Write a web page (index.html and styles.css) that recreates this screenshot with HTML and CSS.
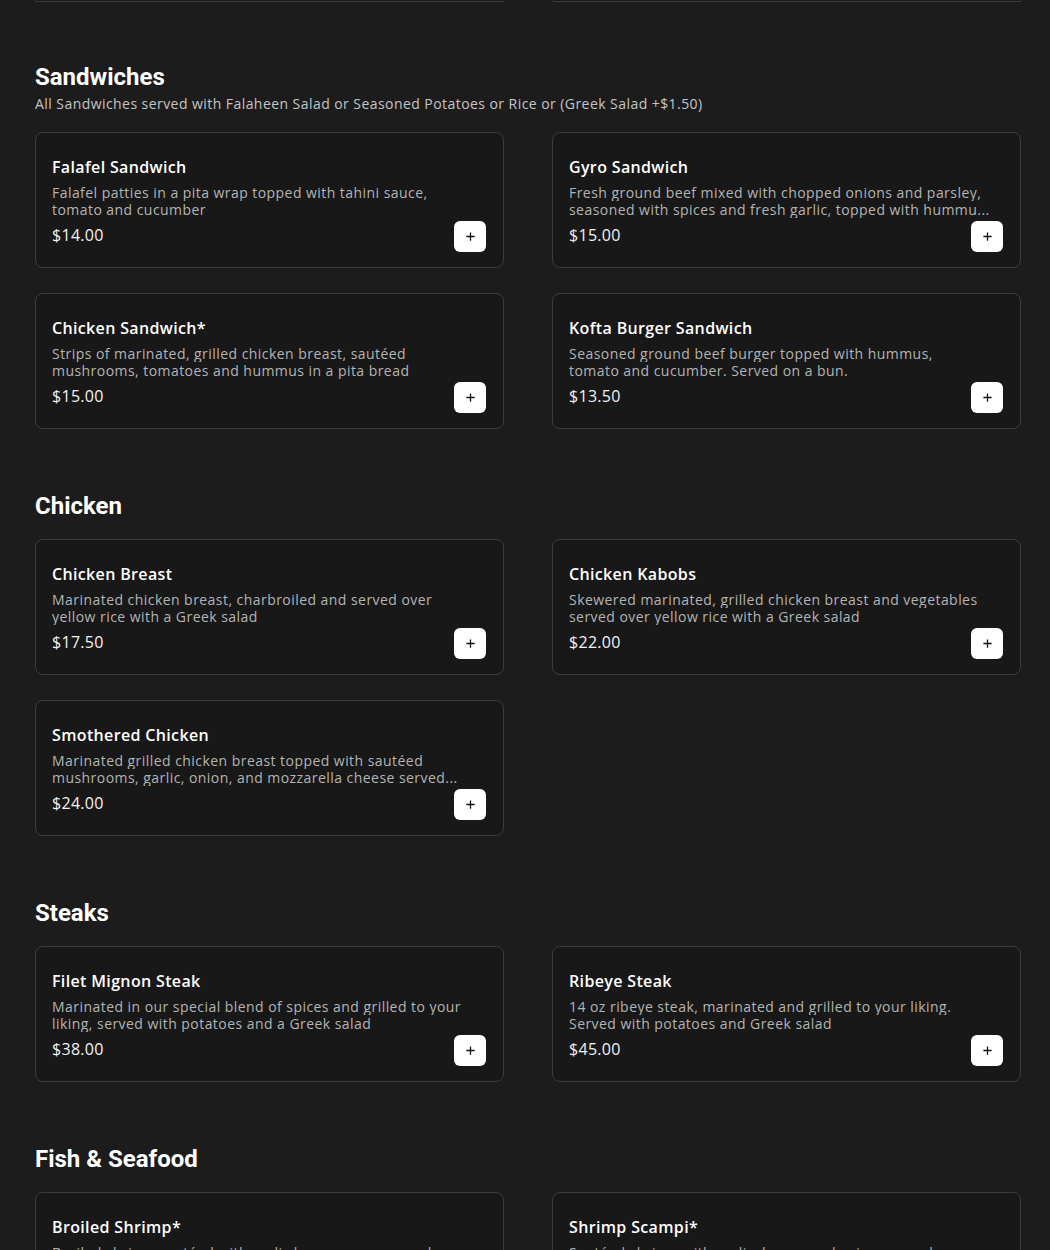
FILE: index.html
```html
<!DOCTYPE html>
<html lang="en">
<head>
<meta charset="utf-8">
<title>Menu</title>
<link rel="stylesheet" href="styles.css">
</head>
<body>
<main class="menu">
  <div class="grid prev">
    <div class="card-tail"></div>
    <div class="card-tail"></div>
  </div>

  <section class="section">
    <header class="sec-head">
      <h2 class="sec-title">Sandwiches</h2>
      <p class="sec-sub">All Sandwiches served with Falaheen Salad or Seasoned Potatoes or Rice or (Greek Salad +$1.50)</p>
    </header>
    <div class="grid">
      <article class="card">
        <h3 class="item-name">Falafel Sandwich</h3>
        <p class="item-desc"><span>Falafel patties in a pita wrap topped with tahini sauce,</span><span>tomato and cucumber</span></p>
        <div class="item-foot"><span class="price">$14.00</span><button class="add" aria-label="Add"><svg viewBox="0 0 12 12" width="11" height="11"><path d="M6 1.5v9M1.5 6h9" stroke="#111" stroke-width="1.4" fill="none"/></svg></button></div>
      </article>
      <article class="card">
        <h3 class="item-name">Gyro Sandwich</h3>
        <p class="item-desc"><span>Fresh ground beef mixed with chopped onions and parsley,</span><span>seasoned with spices and fresh garlic, topped with hummu...</span></p>
        <div class="item-foot"><span class="price">$15.00</span><button class="add" aria-label="Add"><svg viewBox="0 0 12 12" width="11" height="11"><path d="M6 1.5v9M1.5 6h9" stroke="#111" stroke-width="1.4" fill="none"/></svg></button></div>
      </article>
      <article class="card">
        <h3 class="item-name">Chicken Sandwich*</h3>
        <p class="item-desc"><span>Strips of marinated, grilled chicken breast, sautéed</span><span>mushrooms, tomatoes and hummus in a pita bread</span></p>
        <div class="item-foot"><span class="price">$15.00</span><button class="add" aria-label="Add"><svg viewBox="0 0 12 12" width="11" height="11"><path d="M6 1.5v9M1.5 6h9" stroke="#111" stroke-width="1.4" fill="none"/></svg></button></div>
      </article>
      <article class="card">
        <h3 class="item-name">Kofta Burger Sandwich</h3>
        <p class="item-desc"><span>Seasoned ground beef burger topped with hummus,</span><span>tomato and cucumber. Served on a bun.</span></p>
        <div class="item-foot"><span class="price">$13.50</span><button class="add" aria-label="Add"><svg viewBox="0 0 12 12" width="11" height="11"><path d="M6 1.5v9M1.5 6h9" stroke="#111" stroke-width="1.4" fill="none"/></svg></button></div>
      </article>
    </div>
  </section>

  <section class="section">
    <header class="sec-head">
      <h2 class="sec-title">Chicken</h2>
    </header>
    <div class="grid">
      <article class="card">
        <h3 class="item-name">Chicken Breast</h3>
        <p class="item-desc"><span>Marinated chicken breast, charbroiled and served over</span><span>yellow rice with a Greek salad</span></p>
        <div class="item-foot"><span class="price">$17.50</span><button class="add" aria-label="Add"><svg viewBox="0 0 12 12" width="11" height="11"><path d="M6 1.5v9M1.5 6h9" stroke="#111" stroke-width="1.4" fill="none"/></svg></button></div>
      </article>
      <article class="card">
        <h3 class="item-name">Chicken Kabobs</h3>
        <p class="item-desc"><span>Skewered marinated, grilled chicken breast and vegetables</span><span>served over yellow rice with a Greek salad</span></p>
        <div class="item-foot"><span class="price">$22.00</span><button class="add" aria-label="Add"><svg viewBox="0 0 12 12" width="11" height="11"><path d="M6 1.5v9M1.5 6h9" stroke="#111" stroke-width="1.4" fill="none"/></svg></button></div>
      </article>
      <article class="card">
        <h3 class="item-name">Smothered Chicken</h3>
        <p class="item-desc"><span>Marinated grilled chicken breast topped with sautéed</span><span>mushrooms, garlic, onion, and mozzarella cheese served...</span></p>
        <div class="item-foot"><span class="price">$24.00</span><button class="add" aria-label="Add"><svg viewBox="0 0 12 12" width="11" height="11"><path d="M6 1.5v9M1.5 6h9" stroke="#111" stroke-width="1.4" fill="none"/></svg></button></div>
      </article>
    </div>
  </section>

  <section class="section">
    <header class="sec-head">
      <h2 class="sec-title">Steaks</h2>
    </header>
    <div class="grid">
      <article class="card">
        <h3 class="item-name">Filet Mignon Steak</h3>
        <p class="item-desc"><span>Marinated in our special blend of spices and grilled to your</span><span>liking, served with potatoes and a Greek salad</span></p>
        <div class="item-foot"><span class="price">$38.00</span><button class="add" aria-label="Add"><svg viewBox="0 0 12 12" width="11" height="11"><path d="M6 1.5v9M1.5 6h9" stroke="#111" stroke-width="1.4" fill="none"/></svg></button></div>
      </article>
      <article class="card">
        <h3 class="item-name">Ribeye Steak</h3>
        <p class="item-desc"><span>14 oz ribeye steak, marinated and grilled to your liking.</span><span>Served with potatoes and Greek salad</span></p>
        <div class="item-foot"><span class="price">$45.00</span><button class="add" aria-label="Add"><svg viewBox="0 0 12 12" width="11" height="11"><path d="M6 1.5v9M1.5 6h9" stroke="#111" stroke-width="1.4" fill="none"/></svg></button></div>
      </article>
    </div>
  </section>

  <section class="section">
    <header class="sec-head">
      <h2 class="sec-title">Fish &amp; Seafood</h2>
    </header>
    <div class="grid">
      <article class="card">
        <h3 class="item-name">Broiled Shrimp*</h3>
        <p class="item-desc"><span>Broiled shrimp sautéed with garlic lemon sauce served</span><span>over yellow rice with a Greek salad</span></p>
        <div class="item-foot"><span class="price">$24.00</span><button class="add" aria-label="Add"><svg viewBox="0 0 12 12" width="11" height="11"><path d="M6 1.5v9M1.5 6h9" stroke="#111" stroke-width="1.4" fill="none"/></svg></button></div>
      </article>
      <article class="card">
        <h3 class="item-name">Shrimp Scampi*</h3>
        <p class="item-desc"><span>Sautéed shrimp with garlic, lemon and spices served</span><span>over yellow rice with a Greek salad</span></p>
        <div class="item-foot"><span class="price">$24.00</span><button class="add" aria-label="Add"><svg viewBox="0 0 12 12" width="11" height="11"><path d="M6 1.5v9M1.5 6h9" stroke="#111" stroke-width="1.4" fill="none"/></svg></button></div>
      </article>
    </div>
  </section>
</main>
</body>
</html>
```

FILE: styles.css
```css
* { box-sizing: border-box; }

html, body {
  margin: 0;
  padding: 0;
  background: #1c1c1c;
}

body {
  font-family: "Open Sans", "DejaVu Sans", sans-serif;
  color: #ffffff;
  overflow: hidden;
}

.menu {
  width: 986px;
  margin-left: 35px;
  padding-bottom: 40px;
}

.grid {
  display: grid;
  grid-template-columns: 1fr 1fr;
  column-gap: 48px;
  row-gap: 25px;
}

.prev .card-tail {
  height: 2px;
  border: 1px solid #3c3c3c;
  border-top: none;
  border-radius: 0 0 8px 8px;
  background: #181818;
}

.section {
  margin-top: 63px;
}

.section:first-of-type {
  margin-top: 61px;
}

.sec-head {
  margin-bottom: 19px;
}

.sec-title {
  margin: 0;
  font-family: Roboto, "Liberation Sans", sans-serif;
  font-weight: 700;
  font-size: 24px;
  line-height: 28px;
  color: #ffffff;
}

.sec-sub {
  margin: 3px 0 -1px;
  font-size: 14px;
  line-height: 20px;
  letter-spacing: 0.44px;
  color: #c4c4c4;
}

.card {
  height: 136px;
  border: 1px solid #3c3c3c;
  border-radius: 8px;
  background: #181818;
  padding: 24px 17px 14px 16px;
  display: flex;
  flex-direction: column;
}

.item-name {
  margin: 0;
  font-size: 16px;
  line-height: 20px;
  font-weight: 600;
  letter-spacing: 0.35px;
  color: #ffffff;
}

.item-desc {
  margin: 7px 0 0;
  font-size: 14px;
  line-height: 17px;
  letter-spacing: 0.45px;
  color: #b4b4b4;
}

.item-desc span {
  display: block;
  white-space: nowrap;
  overflow: hidden;
  text-overflow: ellipsis;
}

.item-foot {
  margin-top: 2px;
  display: flex;
  align-items: center;
  justify-content: space-between;
  height: 32px;
}

.price {
  font-size: 16px;
  letter-spacing: 0.3px;
  padding-bottom: 2px;
  color: #f2f2f2;
}

.add {
  width: 32px;
  height: 31px;
  border: none;
  border-radius: 6px;
  background: #ffffff;
  padding: 0;
  display: flex;
  align-items: center;
  justify-content: center;
  cursor: pointer;
}
```
